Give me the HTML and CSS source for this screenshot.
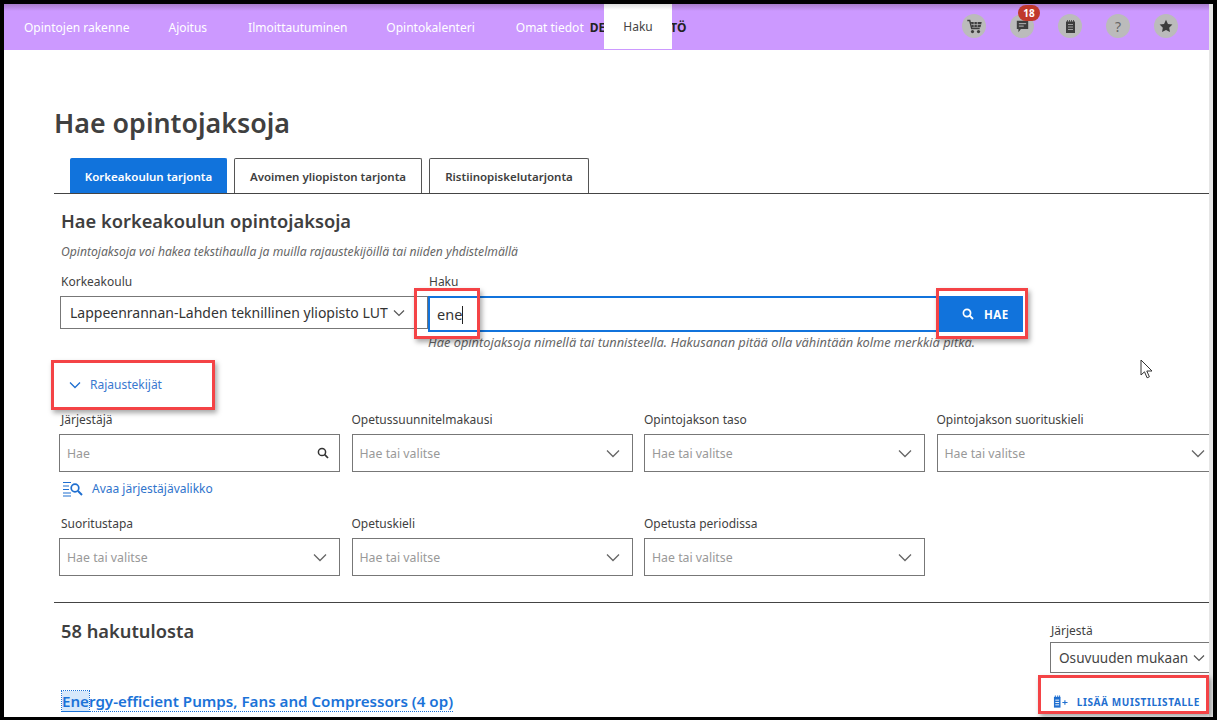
FILE: index.html
```html
<!DOCTYPE html>
<html lang="fi">
<head>
<meta charset="utf-8">
<title>Hae opintojaksoja</title>
<link rel="stylesheet" href="styles.css">
</head>
<body>
<div class="screen">
  <header class="topbar">
    <nav class="nav">
      <a class="nav-item">Opintojen rakenne</a>
      <a class="nav-item">Ajoitus</a>
      <a class="nav-item nav-3">Ilmoittautuminen</a>
      <a class="nav-item">Opintokalenteri</a>
      <a class="nav-item nav-5">Omat tiedot</a>
      <span class="nav-behind">DE<span class="gap"></span>TÖ</span>
      <a class="nav-active">Haku</a>
    </nav>
    <div class="tools">
      <span class="tool"><svg width="17" height="16" viewBox="0 0 20 20"><path d="M1 3h3l2.500 10h10" fill="none" stroke="#3d3d3d" stroke-width="1.900"/><path d="M5.500 5H19l-1.500 6.500H7z" fill="#3d3d3d"/><path d="M9.500 5v6M13.500 5v6M6 8.200h12" stroke="#bbb" stroke-width=".9"/><circle cx="7.500" cy="17" r="2" fill="#3d3d3d"/><circle cx="15" cy="17" r="2" fill="#3d3d3d"/></svg></span>
      <span class="tool"><svg width="13" height="13" viewBox="0 0 16 16"><path d="M1 1h14v10H6l-3 4v-4H1z" fill="#3d3d3d"/><path d="M3.500 4.500h9M3.500 7.500h6" stroke="#bbb" stroke-width="1.200"/></svg><span class="badge">18</span></span>
      <span class="tool"><svg width="9" height="13" viewBox="0 0 9 13"><path d="M0 1.500h9V13H0z" fill="#3d3d3d"/><path d="M1.500 0v2M3.500 0v2M5.500 0v2M7.500 0v2" stroke="#3d3d3d" stroke-width=".8"/><path d="M2 4.500h5M2 7h5M2 9.500h5" stroke="#bbb" stroke-width=".8"/></svg></span>
      <span class="tool tool-q">?</span>
      <span class="tool"><svg width="14" height="14" viewBox="0 0 18 18"><path d="M9 1l2.500 5.300 5.700.8-4.100 4 1 5.700L9 14.100l-5.100 2.700 1-5.700-4.100-4 5.700-.8z" fill="#3d3d3d"/></svg></span>
    </div>
  </header>

  <main class="page">
    <h1 class="title">Hae opintojaksoja</h1>
    <div class="tabs">
      <a class="tab tab-on">Korkeakoulun tarjonta</a>
      <a class="tab tab-open">Avoimen yliopiston tarjonta</a>
      <a class="tab tab-cross">Ristiinopiskelutarjonta</a>
    </div>

    <section class="panel">
      <h2 class="sub">Hae korkeakoulun opintojaksoja</h2>
      <p class="lead">Opintojaksoja voi hakea tekstihaulla ja muilla rajaustekijöillä tai niiden yhdistelmällä</p>

      <div class="search-row">
        <div class="school">
          <label class="label">Korkeakoulu</label>
          <div class="school-select">
            <span>Lappeenrannan-Lahden teknillinen yliopisto LUT</span>
            <svg width="12" height="8" viewBox="0 0 12 8"><path d="M1 1.500l5 5 5-5" fill="none" stroke="#555" stroke-width="1.200"/></svg>
          </div>
        </div>
        <div class="query">
          <label class="label">Haku</label>
          <div class="query-row">
            <div class="query-input">ene<span class="caret"></span></div>
            <button class="go"><svg width="12" height="12" viewBox="0 0 12 12"><circle cx="5" cy="5" r="3.600" fill="none" stroke="#fff" stroke-width="1.700"/><path d="M7.700 7.700l3.300 3.300" stroke="#fff" stroke-width="1.900"/></svg>HAE</button>
          </div>
          <p class="hint">Hae opintojaksoja nimellä tai tunnisteella. Hakusanan pitää olla vähintään kolme merkkiä pitkä.</p>
        </div>
      </div>

      <a class="toggle"><svg width="12" height="8" viewBox="0 0 12 8"><path d="M1 1.500l5 5 5-5" fill="none" stroke="#1f6fd0" stroke-width="1.300"/></svg>Rajaustekijät</a>

      <div class="filters">
        <div class="field">
          <label class="label">Järjestäjä</label>
          <div class="box box-search"><span>Hae</span><svg width="12" height="12" viewBox="0 0 12 12"><circle cx="5" cy="5" r="3.600" fill="none" stroke="#333" stroke-width="1.500"/><path d="M7.700 7.700l3.300 3.300" stroke="#333" stroke-width="1.700"/></svg></div>
          <a class="open-menu"><svg width="21" height="16" viewBox="0 0 21 16"><path d="M1 1.500h8M1 5h6M1 8.500h6M1 12h8M1 15h8" stroke="#1f6fd0" stroke-width="1.200"/><circle cx="13" cy="7" r="3.800" fill="none" stroke="#1f6fd0" stroke-width="1.700"/><path d="M16 10l4 4" stroke="#1f6fd0" stroke-width="1.900"/></svg>Avaa järjestäjävalikko</a>
        </div>
        <div class="field">
          <label class="label">Opetussuunnitelmakausi</label>
          <div class="box"><span>Hae tai valitse</span><svg width="14" height="9" viewBox="0 0 14 9"><path d="M1 1.500l6 6 6-6" fill="none" stroke="#666" stroke-width="1.300"/></svg></div>
        </div>
        <div class="field">
          <label class="label">Opintojakson taso</label>
          <div class="box"><span>Hae tai valitse</span><svg width="14" height="9" viewBox="0 0 14 9"><path d="M1 1.500l6 6 6-6" fill="none" stroke="#666" stroke-width="1.300"/></svg></div>
        </div>
        <div class="field">
          <label class="label">Opintojakson suorituskieli</label>
          <div class="box"><span>Hae tai valitse</span><svg width="14" height="9" viewBox="0 0 14 9"><path d="M1 1.500l6 6 6-6" fill="none" stroke="#666" stroke-width="1.300"/></svg></div>
        </div>
        <div class="field">
          <label class="label">Suoritustapa</label>
          <div class="box"><span>Hae tai valitse</span><svg width="14" height="9" viewBox="0 0 14 9"><path d="M1 1.500l6 6 6-6" fill="none" stroke="#666" stroke-width="1.300"/></svg></div>
        </div>
        <div class="field">
          <label class="label">Opetuskieli</label>
          <div class="box"><span>Hae tai valitse</span><svg width="14" height="9" viewBox="0 0 14 9"><path d="M1 1.500l6 6 6-6" fill="none" stroke="#666" stroke-width="1.300"/></svg></div>
        </div>
        <div class="field">
          <label class="label">Opetusta periodissa</label>
          <div class="box"><span>Hae tai valitse</span><svg width="14" height="9" viewBox="0 0 14 9"><path d="M1 1.500l6 6 6-6" fill="none" stroke="#666" stroke-width="1.300"/></svg></div>
        </div>
      </div>
    </section>

    <section class="results">
      <div class="results-head">
        <h2 class="count">58 hakutulosta</h2>
        <div class="sort">
          <label class="label">Järjestä</label>
          <div class="sort-select"><span>Osuvuuden mukaan</span><svg width="12" height="8" viewBox="0 0 12 8"><path d="M1 1.500l5 5 5-5" fill="none" stroke="#555" stroke-width="1.200"/></svg></div>
        </div>
      </div>
      <div class="result-row">
        <a class="result-link"><span class="hl">Ene</span>rgy-efficient Pumps, Fans and Compressors (4 op)</a>
        <a class="add"><svg width="15" height="14" viewBox="0 0 16 14"><path d="M1 1.500h7V13H1z" fill="#1f6fd0"/><path d="M2.500 0v3M5 0v3M7 0v3" stroke="#1f6fd0"/><path d="M2.500 5h4M2.500 7.500h4M2.500 10h4" stroke="#fff"/><path d="M10 7.500h5.500M12.700 5v5" stroke="#1f6fd0" stroke-width="1.200"/></svg>LISÄÄ MUISTILISTALLE</a>
      </div>
    </section>
  </main>

  <span class="mark mark-ene"></span>
  <span class="mark mark-hae"></span>
  <span class="mark mark-raj"></span>
  <span class="mark mark-add"></span>
  <svg class="cursor" width="14" height="20" viewBox="0 0 14 20"><path d="M1 1v15l3.500-3.200 2.600 6 2.300-1-2.600-5.800H12z" fill="#fff" stroke="#333" stroke-width="1"/></svg>
</div>
</body>
</html>
```
FILE: styles.css
```css
* { box-sizing: border-box; }
html, body { margin: 0; height: 100%; overflow: hidden; background: #000; }
body { font-family: "Noto Sans", "Open Sans", sans-serif; color: #3f3f3f; }
a { display: inline-block; }
p, h1, h2 { margin: 0; }

.screen {
  position: relative;
  width: 1209px;
  height: 713px;
  margin: 4px 0 0 4px;
  background: #e6e6e6;
  overflow: hidden;
}

.topbar {
  height: 46px;
  margin-right: 4px;
  background: linear-gradient(#a77ccb 0, #cc99ff 7px);
  display: flex;
  justify-content: space-between;
  position: relative;
}
.nav { display: flex; align-items: center; gap: 39px; height: 46px; font-size: 12px; color: #fff; padding-left: 20px; white-space: nowrap; }
.nav-item { color: #fff; }
.nav-3 { margin-left: 2px; }
.nav-5 { margin-left: 2px; }
.nav-behind { margin-left: -33px; color: #222; font-weight: 700; font-size: 12px; display: flex; }
.gap { width: 65px; }
.nav-active {
  position: absolute;
  left: 600px; top: 0;
  width: 68px; height: 45px;
  background: linear-gradient(#dcdcdc 0, #fff 6px);
  color: #444;
  text-align: center;
  line-height: 46px;
}
.tools { display: flex; align-items: center; gap: 24px; padding: 0 31px 2px 0; }
.tool {
  width: 24px; height: 24px; border-radius: 50%;
  background: #bbb;
  display: flex; align-items: center; justify-content: center;
  position: relative;
}
.tool-q { font-size: 14px; color: #666; }
.badge {
  position: absolute; left: 8px; top: -9px;
  width: 22px; height: 16px; border-radius: 8px;
  background: #c0392b; color: #fff;
  font-size: 10px; font-weight: 700; text-align: center; line-height: 16px;
}

.page { margin-right: 4px; height: 667px; background: #fff; padding: 55px 0 0 50px; overflow: hidden; }
.title { font-size: 26.800px; font-weight: 600; line-height: 36px; color: #404040; }
.tabs {
  display: flex; gap: 7px; margin-top: 17px; padding-left: 16px;
  border-bottom: 1px solid #444; height: 36px;
}
.tab {
  height: 35px; line-height: 35px; white-space: nowrap;
  border: 1px solid #555; border-bottom: 0; border-radius: 2px 2px 0 0;
  font-size: 11.500px; font-weight: 600; color: #404040;
  text-align: center;
}
.tab-on { width: 157px; background: #1173dc; border-color: #1173dc; color: #fff; }
.tab-open { width: 188px; }
.tab-cross { width: 160px; }

.panel { padding: 0 0 26px 7px; border-bottom: 1px solid #444; }
.sub { font-size: 18.300px; font-weight: 600; line-height: 26px; padding-top: 14px; box-sizing: content-box; }
.lead { font-size: 12.150px; font-style: italic; color: #666; line-height: 16px; margin-top: 10px; }
.search-row { display: flex; margin: 14px 0 0 -1px; }
.label { display: block; font-size: 12px; line-height: 16px; color: #3f3f3f; padding-left: 1px; }
.school { width: 368px; }
.school-select {
  margin-top: 6px; height: 33px; width: 100%;
  border: 1px solid #777; display: flex; align-items: center; gap: 5px;
  padding-left: 9px; font-size: 14px; color: #333; white-space: nowrap; overflow: hidden;
}
.query { width: 595px; }
.query-row { display: flex; margin-top: 6px; height: 36px; }
.query-input {
  flex: 1; border: 2px solid #1173dc; padding-left: 7px;
  font-size: 14.500px; line-height: 32px; color: #333;
}
.caret { display: inline-block; width: 1px; height: 18px; background: #222; vertical-align: -4px; }
.go {
  width: 84px; border: 0; background: #1173dc; color: #fff; padding: 0 0 0 23px;
  font: 700 11.500px "Noto Sans", sans-serif; letter-spacing: .5px;
  display: flex; align-items: center; gap: 10px;
}
.hint { font-size: 12.800px; font-style: italic; color: #666; line-height: 14px; margin-top: 3px; white-space: nowrap; }

.toggle { display: flex; align-items: center; gap: 9px; margin: 28px 0 0 8px; font-size: 12px; color: #3a78cf; line-height: 16px; }
.filters {
  display: grid; grid-template-columns: repeat(4, 281px); column-gap: 11.500px; row-gap: 19px;
  margin: 19px -100px 0 -2px;
}
.filters .label { padding-left: 0; }
.filters .field:nth-child(4n+1) .label { padding-left: 2px; }
.box {
  margin-top: 6px; height: 38px; border: 1px solid #777;
  display: flex; align-items: center; justify-content: space-between;
  padding: 0 12px 0 7px; font-size: 12.300px; color: #999;
}
.box-search { padding-right: 10px; }
.open-menu { display: flex; align-items: center; gap: 9px; margin: 9px 0 0 3px; font-size: 12px; color: #2f74cc; line-height: 16px; }

.results-head { display: flex; justify-content: space-between; }
.count { font-size: 18.300px; font-weight: 600; line-height: 26px; margin: 15px 0 0 7px; }
.sort { width: 159px; margin-top: 20px; }
.sort-select {
  margin-top: 3px; height: 31px; width: 159px;
  border: 1px solid #777; border-right: 0; display: flex; align-items: center; gap: 5px;
  padding-left: 8px; font-size: 13.600px; color: #444; white-space: nowrap;
}
.result-row { display: flex; justify-content: space-between; align-items: center; padding: 0 9px 0 8px; margin-top: 19px; }
.result-link { font-size: 15.150px; font-weight: 600; color: #1b73d8; border-bottom: 1px dotted #1b73d8; line-height: 19px; white-space: nowrap; }
.hl { background: #d6e8fb; outline: 1px dotted #1b73d8; }
.add { display: flex; align-items: center; gap: 9px; font-size: 10px; font-weight: 700; color: #1f6fd0; letter-spacing: .6px; white-space: nowrap; }

.mark { position: absolute; border: 3px solid #f44346; box-shadow: 2px 3px 5px rgba(0,0,0,.35); }
.mark-ene { left: 410px; top: 284px; width: 66px; height: 51px; }
.mark-hae { left: 932px; top: 284px; width: 92px; height: 51px; }
.mark-raj { left: 47px; top: 356px; width: 164px; height: 50px; }
.mark-add { left: 1034px; top: 671px; width: 171px; height: 39px; }
.cursor { position: absolute; left: 1136px; top: 355px; }
```
